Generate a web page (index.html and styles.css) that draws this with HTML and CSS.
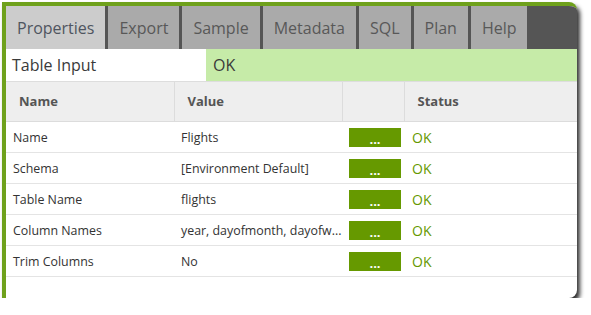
FILE: index.html
```html
<!DOCTYPE html>
<html lang="en">
<head>
    <meta charset="UTF-8">
    <title>Table Input - Properties</title>
    <link rel="stylesheet" href="styles.css">
</head>
<body>

<div class="frame">
    <div class="tabs">
        <div class="tab active">Properties</div>
        <div class="tab">Export</div>
        <div class="tab">Sample</div>
        <div class="tab">Metadata</div>
        <div class="tab">SQL</div>
        <div class="tab">Plan</div>
        <div class="tab">Help</div>
    </div>

    <div class="step-row">
        <div class="step-name">Table Input</div>
        <div class="step-status">OK</div>
    </div>

    <table class="props">
        <colgroup>
            <col class="col-name">
            <col class="col-value">
            <col class="col-btn">
            <col>
        </colgroup>
        <thead>
            <tr>
                <th>Name</th>
                <th>Value</th>
                <th></th>
                <th>Status</th>
            </tr>
        </thead>
        <tbody>
            <tr>
                <td>Name</td>
                <td>Flights</td>
                <td><span class="more-btn">...</span></td>
                <td class="ok">OK</td>
            </tr>
            <tr>
                <td>Schema</td>
                <td>[Environment Default]</td>
                <td><span class="more-btn">...</span></td>
                <td class="ok">OK</td>
            </tr>
            <tr>
                <td>Table Name</td>
                <td>flights</td>
                <td><span class="more-btn">...</span></td>
                <td class="ok">OK</td>
            </tr>
            <tr>
                <td>Column Names</td>
                <td>year, dayofmonth, dayofw...</td>
                <td><span class="more-btn">...</span></td>
                <td class="ok">OK</td>
            </tr>
            <tr>
                <td>Trim Columns</td>
                <td>No</td>
                <td><span class="more-btn">...</span></td>
                <td class="ok">OK</td>
            </tr>
        </tbody>
    </table>
</div>

</body>
</html>
```

FILE: styles.css
```css
:root {
    --green: #669900;
    --green-edge: #6fa11c;
    --light-green: #c6eba8;
    --tab-dark: #555555;
    --tab-bg: #aaaaaa;
    --tab-active: #cccccc;
    --head-bg: #eeeeee;
    --line: #e4e4e4;
    --text: #333333;
    --font-family: "Open Sans", "Noto Sans", Arial, sans-serif;
}

body {
    margin: 0;
    background: #ffffff;
    font-family: var(--font-family);
    color: var(--text);
}

.frame {
    margin: 2px 0 0 2px;
    width: 571px;
    height: 292px;
    border-top: 4px solid var(--green-edge);
    border-left: 4px solid var(--green-edge);
    border-radius: 0 8px 8px 0;
    background: #ffffff;
    box-shadow: 3px 4px 4px rgba(0,0,0,0.8);
    overflow: hidden;
}

.tabs {
    display: flex;
    gap: 3px;
    height: 43px;
    background: var(--tab-dark);
}

.tab {
    display: flex;
    align-items: center;
    padding: 0 11px;
    background: var(--tab-bg);
    color: #585858;
    font-size: 16px;
}

.tab.active {
    background: var(--tab-active);
    color: #4f5560;
}

.step-row {
    display: flex;
    height: 32px;
    border-bottom: 1px solid #dddddd;
    font-size: 16px;
}

.step-name {
    width: 194px;
    padding-left: 6px;
    display: flex;
    align-items: center;
    color: #3a3a3a;
}

.step-status {
    flex: 1;
    padding-left: 7px;
    display: flex;
    align-items: center;
    background: var(--light-green);
    color: #3a3a3a;
}

.props {
    width: 571px;
    border-collapse: collapse;
    table-layout: fixed;
    font-size: 12.4px;
}

.col-name { width: 168px; }
.col-value { width: 168px; }
.col-btn { width: 62px; }

.props th {
    height: 37px;
    padding: 0 0 2px 13px;
    background: var(--head-bg);
    border-left: 1px solid #dcdcdc;
    border-bottom: 1px solid #dcdcdc;
    color: #555555;
    font-size: 13px;
    font-weight: bold;
    text-align: left;
}

.props th:first-child { border-left: none; }

.props td {
    height: 30px;
    padding: 0 0 0 7px;
    border-bottom: 1px solid var(--line);
    white-space: nowrap;
    overflow: hidden;
}

.more-btn {
    display: inline-flex;
    justify-content: center;
    align-items: flex-end;
    width: 52px;
    height: 19px;
    padding-bottom: 1px;
    box-sizing: border-box;
    background: var(--green);
    color: #ffffff;
    font-weight: bold;
    font-size: 13px;
    line-height: 1;
    vertical-align: middle;
}

.props td.ok {
    padding-left: 8px;
    color: var(--green);
    font-size: 14px;
}
```
